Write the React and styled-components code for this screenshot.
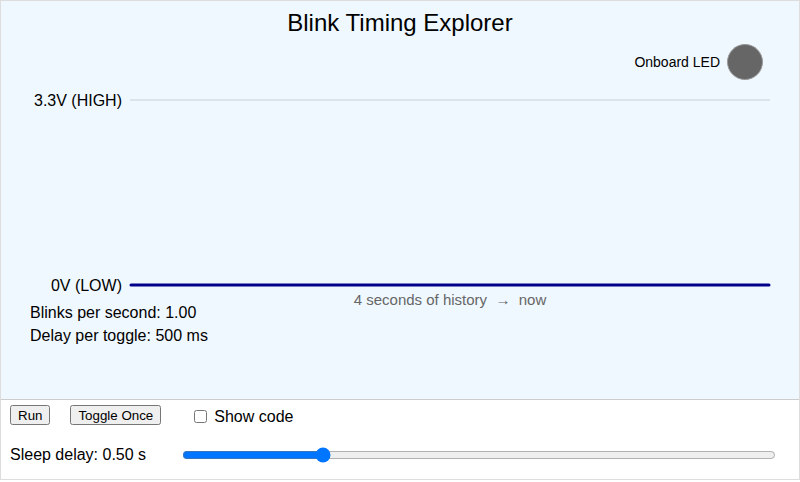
import React, { useState } from 'react';
import styled, { createGlobalStyle } from 'styled-components';

const GlobalStyle = createGlobalStyle`
  * { box-sizing: border-box; }
  body {
    margin: 0;
    font-family: "Liberation Sans", Arial, sans-serif;
    color: #000;
    background: #fff;
  }
`

const Frame = styled.div`
  width: 800px;
  height: 480px;
  border: 1px solid #ddd;
  display: flex;
  flex-direction: column;
`
const Stage = styled.div`
  height: 399px;
  background: #f0f8ff;
  border-bottom: 1px solid #ccc;
  padding-top: 8px;
  display: flex;
  flex-direction: column;
`
const Title = styled.h1`
  margin: 0;
  font-size: 24px;
  line-height: 28px;
  font-weight: normal;
  text-align: center;
`
const LedRow = styled.div`
  margin-top: 7px;
  height: 36px;
  display: flex;
  align-items: center;
  justify-content: flex-end;
  gap: 7px;
  padding-right: 36px;
  font-size: 14px;
`
const Led = styled.div`
  width: 36px;
  height: 36px;
  border-radius: 50%;
  background: ${p => (p.$on ? '#ffd23f' : '#666')};
  border: 1px solid #999;
`
const Chart = styled.svg`
  display: block;
  overflow: visible;
  font-family: "Liberation Sans", Arial, sans-serif;
`
const Stats = styled.div`
  padding-left: 29px;
  display: flex;
  flex-direction: column;
  gap: 5px;
  font-size: 16px;
  line-height: 18px;
`
const Panel = styled.div`
  flex: 1;
  padding: 4px 9px 0 9px;
  background: #fff;
`
const Row = styled.div`
  display: flex;
  align-items: center;
  height: ${p => p.$h}px;
  margin-top: ${p => p.$gap || 0}px;
`
const Button = styled.button`
  font-family: "Liberation Sans", Arial, sans-serif;
  font-size: 13.33px;
  height: 20px;
  padding: 1px 6px;
  margin-right: ${p => p.$mr || 0}px;
`
const CheckLabel = styled.label`
  display: flex;
  align-items: center;
  font-size: 16px;
  padding-top: 3px;
  input {
    margin: 0 7px 0 0;
    width: 13px;
    height: 13px;
  }
`
const SliderLabel = styled.span`
  font-size: 16px;
  margin-right: 36px;
`
const Slider = styled.input`
  flex: 1;
  margin: 0 14px 0 0;
`

export default function App() {
  const [delay, setDelay] = useState(0.5);
  const [showCode, setShowCode] = useState(false);

  return (
    <>
      <GlobalStyle />
      <Frame>
        <Stage>
          <Title>Blink Timing Explorer</Title>
          <LedRow>
            Onboard LED
            <Led />
          </LedRow>
          <Chart width="798" height="224" viewBox="0 0 798 224">
            <line x1="129" y1="20" x2="769" y2="20" stroke="#dde3ea" strokeWidth="2" />
            <text x="121" y="25.5" fontSize="16" textAnchor="end" fill="#000">3.3V (HIGH)</text>
            <line x1="130" y1="205" x2="768" y2="205" stroke="#00008b" strokeWidth="3" strokeLinecap="round" />
            <text x="121" y="210.5" fontSize="16" textAnchor="end" fill="#000">0V (LOW)</text>
            <text x="449" y="225" fontSize="15" textAnchor="middle" fill="#666">
              {'4 seconds of history \u00a0\u2192\u00a0 now'}
            </text>
          </Chart>
          <Stats>
            <div>Blinks per second: {(1 / (2 * delay)).toFixed(2)}</div>
            <div>Delay per toggle: {Math.round(delay * 1000)} ms</div>
          </Stats>
        </Stage>
        <Panel>
          <Row $h={22}>
            <Button $mr={20}>Run</Button>
            <Button $mr={33}>Toggle Once</Button>
            <CheckLabel>
              <input
                type="checkbox"
                checked={showCode}
                onChange={e => setShowCode(e.target.checked)}
              />
              Show code
            </CheckLabel>
          </Row>
          <Row $h={24} $gap={17}>
            <SliderLabel>Sleep delay: {delay.toFixed(2)} s</SliderLabel>
            <Slider
              type="range"
              min="0.05"
              max="2"
              step="0.05"
              value={delay}
              onChange={e => setDelay(parseFloat(e.target.value))}
            />
          </Row>
        </Panel>
      </Frame>
    </>
  );
}
